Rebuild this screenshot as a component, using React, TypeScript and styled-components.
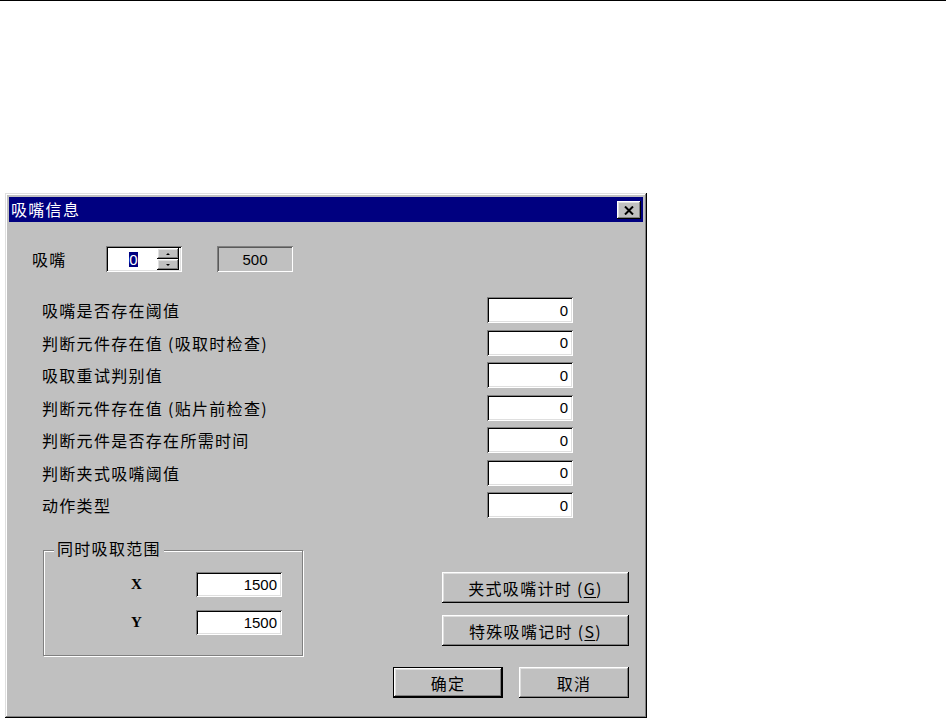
import React from "react";
import styled, { createGlobalStyle, css } from "styled-components";

const GlobalStyle = createGlobalStyle`
  html, body {
    margin: 0;
    padding: 0;
    background: #ffffff;
    overflow: hidden;
  }
  * { box-sizing: border-box; }
`;

const raised = css`
  box-shadow: inset -1px -1px 0 #000000, inset 1px 1px 0 #ffffff,
    inset -2px -2px 0 #808080, inset 2px 2px 0 #dfdfdf;
`;

const sunken = css`
  box-shadow: inset 1px 1px 0 #808080, inset -1px -1px 0 #ffffff,
    inset 2px 2px 0 #000000, inset -2px -2px 0 #dfdfdf;
`;

const cjk = css`
  font-family: "Noto Sans CJK SC", "Noto Sans", sans-serif;
  font-size: 16px;
  line-height: 18px;
  letter-spacing: 1.3px;
  color: #000000;
`;

const Page = styled.div`
  width: 948px;
  height: 718px;
  display: flex;
  flex-direction: column;
  align-items: flex-start;
`;

const TopRule = styled.div`
  width: 946px;
  height: 1px;
  background: #000000;
  flex-shrink: 0;
`;

const Dialog = styled.div`
  margin: 192px 0 0 5px;
  width: 642px;
  height: 525px;
  padding: 4px;
  background: #c0c0c0;
  display: flex;
  flex-direction: column;
  box-shadow: inset -1px -1px 0 #000000, inset 1px 1px 0 #dfdfdf,
    inset -2px -2px 0 #808080, inset 2px 2px 0 #ffffff;
`;

const TitleBar = styled.div`
  height: 25px;
  background: #000080;
  display: flex;
  align-items: center;
  justify-content: space-between;
  padding: 0 2px 0 2px;
`;

const TitleText = styled.span`
  ${cjk};
  color: #ffffff;
  margin-top: -2px;
`;

const CloseButton = styled.div`
  width: 24px;
  height: 18px;
  background: #c0c0c0;
  ${raised};
  display: flex;
  align-items: center;
  justify-content: center;
  margin-top: 1px;
`;

const Body = styled.div`
  flex: 1;
  display: flex;
  flex-direction: column;
  padding: 24px 14px 0 0;
`;

const NozzleRow = styled.div`
  display: flex;
  align-items: center;
  height: 26px;
  padding-left: 23px;
`;

const NozzleLabel = styled.span`
  ${cjk};
  width: 74px;
`;

const Spinner = styled.div`
  width: 76px;
  height: 26px;
  background: #ffffff;
  ${sunken};
  padding: 2px;
  display: flex;
`;

const SpinField = styled.div`
  flex: 1;
  display: flex;
  align-items: center;
  justify-content: center;
  padding-left: 2px;
`;

const Selected = styled.span`
  background: #000080;
  color: #ffffff;
  font-family: "Liberation Sans", Arial, sans-serif;
  font-size: 15px;
  line-height: 15px;
  outline: 1px dotted #ffffff;
`;

const SpinButtons = styled.div`
  width: 22px;
  display: flex;
  flex-direction: column;
  margin-right: 1px;
`;

const SpinButton = styled.div<{ $up?: boolean }>`
  flex: 1;
  background: #c0c0c0;
  ${raised};
  position: relative;
  &::after {
    content: "";
    position: absolute;
    left: 50%;
    top: 50%;
    margin-left: -2px;
    margin-top: -1px;
    border-left: 2px solid transparent;
    border-right: 2px solid transparent;
    ${(p) =>
      p.$up
        ? "border-bottom: 2px solid #000000;"
        : "border-top: 2px solid #000000;"}
  }
`;

const StaticBox = styled.div`
  margin-left: 35px;
  width: 76px;
  height: 26px;
  background: #c0c0c0;
  box-shadow: inset 1px 1px 0 #808080, inset -1px -1px 0 #ffffff,
    inset 2px 2px 0 #5a5a5a;
  display: flex;
  align-items: center;
  justify-content: center;
  font-family: "Liberation Sans", Arial, sans-serif;
  font-size: 15px;
  color: #000000;
`;

const ParamList = styled.div`
  margin-top: 25px;
  padding-left: 33px;
  display: grid;
  grid-template-columns: 445px 86px;
  grid-auto-rows: 26px;
  row-gap: 6.5px;
  align-items: center;
`;

const ParamLabel = styled.span`
  ${cjk};
`;

const NumberEdit = styled.div<{ $w?: number; $h?: number }>`
  width: ${(p) => p.$w ?? 86}px;
  height: ${(p) => p.$h ?? 26}px;
  background: #ffffff;
  ${sunken};
  display: flex;
  align-items: center;
  justify-content: flex-end;
  padding: 0 5px 0 4px;
  font-family: "Liberation Sans", Arial, sans-serif;
  font-size: 15px;
  color: #000000;
`;

const BottomArea = styled.div`
  margin-top: 32px;
  display: flex;
  justify-content: space-between;
  align-items: flex-start;
  padding-left: 34px;
`;

const GroupBox = styled.div`
  position: relative;
  width: 260px;
  height: 106px;
  border: 1px solid #808080;
  box-shadow: 1px 1px 0 #ffffff, inset 1px 1px 0 #ffffff;
  padding: 21px 0 0 86px;
  display: grid;
  grid-template-columns: 66px 86px;
  grid-auto-rows: 25px;
  row-gap: 13px;
  align-items: center;
`;

const GroupLegend = styled.span`
  ${cjk};
  position: absolute;
  top: -12px;
  left: 10px;
  padding: 0 3px;
  background: #c0c0c0;
`;

const AxisLabel = styled.span`
  font-family: "Liberation Serif", "Times New Roman", serif;
  font-weight: bold;
  font-size: 15px;
  color: #000000;
  padding-left: 1px;
`;

const RightColumn = styled.div`
  margin-top: 22px;
  display: flex;
  flex-direction: column;
  align-items: flex-end;
`;

const Button = styled.div<{ $w: number; $default?: boolean }>`
  width: ${(p) => p.$w}px;
  height: 31px;
  background: #c0c0c0;
  display: flex;
  align-items: center;
  justify-content: center;
  ${cjk};
  ${raised};
  ${(p) =>
    p.$default &&
    css`
      border: 1px solid #000000;
    `}
  u {
    text-decoration-thickness: 1px;
    text-underline-offset: 2px;
  }
`;

const SideButtons = styled.div`
  display: flex;
  flex-direction: column;
  gap: 12px;
`;

const ActionRow = styled.div`
  margin-top: 21px;
  display: flex;
  gap: 16px;
`;

const params = [
  "吸嘴是否存在阈值",
  "判断元件存在值 (吸取时检查)",
  "吸取重试判别值",
  "判断元件存在值 (贴片前检查)",
  "判断元件是否存在所需时间",
  "判断夹式吸嘴阈值",
  "动作类型",
];

export default function App() {
  return (
    <>
      <GlobalStyle />
      <Page>
        <TopRule />
        <Dialog>
          <TitleBar>
            <TitleText>吸嘴信息</TitleText>
            <CloseButton>
              <svg width="10" height="9" viewBox="0 0 10 9">
                <path d="M1 0.5 L9 8.5 M9 0.5 L1 8.5" stroke="#000" strokeWidth="2" fill="none" />
              </svg>
            </CloseButton>
          </TitleBar>
          <Body>
            <NozzleRow>
              <NozzleLabel>吸嘴</NozzleLabel>
              <Spinner>
                <SpinField>
                  <Selected>0</Selected>
                </SpinField>
                <SpinButtons>
                  <SpinButton $up />
                  <SpinButton />
                </SpinButtons>
              </Spinner>
              <StaticBox>500</StaticBox>
            </NozzleRow>
            <ParamList>
              {params.map((p) => (
                <React.Fragment key={p}>
                  <ParamLabel>{p}</ParamLabel>
                  <NumberEdit>0</NumberEdit>
                </React.Fragment>
              ))}
            </ParamList>
            <BottomArea>
              <GroupBox>
                <GroupLegend>同时吸取范围</GroupLegend>
                <AxisLabel>X</AxisLabel>
                <NumberEdit $h={25}>1500</NumberEdit>
                <AxisLabel>Y</AxisLabel>
                <NumberEdit $h={25}>1500</NumberEdit>
              </GroupBox>
              <RightColumn>
                <SideButtons>
                  <Button $w={187}>
                    夹式吸嘴计时 (<u>G</u>)
                  </Button>
                  <Button $w={187}>
                    特殊吸嘴记时 (<u>S</u>)
                  </Button>
                </SideButtons>
                <ActionRow>
                  <Button $w={110} $default>
                    确定
                  </Button>
                  <Button $w={110}>取消</Button>
                </ActionRow>
              </RightColumn>
            </BottomArea>
          </Body>
        </Dialog>
      </Page>
    </>
  );
}
